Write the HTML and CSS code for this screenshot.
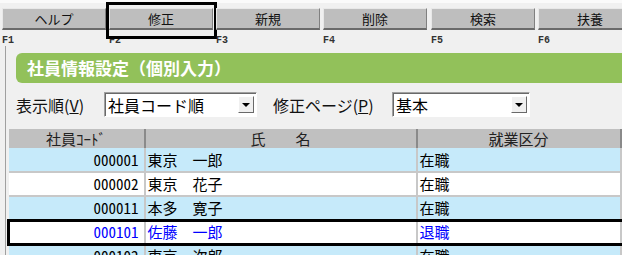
FILE: index.html
```html
<!DOCTYPE html>
<html lang="ja">
<head>
    <meta charset="UTF-8">
    <meta name="viewport" content="width=device-width, initial-scale=1.0">
    <title>社員情報設定（個別入力）</title>
    <link rel="stylesheet" href="styles.css">
</head>
<body>
    <div class="window">
        <div class="fkeys">
            <div class="fkey">
                <button class="fkey-button">ヘルプ</button>
                <span class="fkey-label">F1</span>
            </div>
            <div class="fkey active">
                <button class="fkey-button">修正</button>
                <span class="fkey-label">F2</span>
            </div>
            <div class="fkey">
                <button class="fkey-button">新規</button>
                <span class="fkey-label">F3</span>
            </div>
            <div class="fkey">
                <button class="fkey-button">削除</button>
                <span class="fkey-label">F4</span>
            </div>
            <div class="fkey group-start">
                <button class="fkey-button">検索</button>
                <span class="fkey-label">F5</span>
            </div>
            <div class="fkey">
                <button class="fkey-button">扶養</button>
                <span class="fkey-label">F6</span>
            </div>
        </div>

        <div class="panel">
            <h2 class="panel-title">社員情報設定（個別入力）</h2>

            <div class="options">
                <label class="option-label">表示順(<u>V</u>)</label>
                <div class="select">
                    <span class="select-value">社員コード順</span>
                    <span class="select-arrow"></span>
                </div>
                <label class="option-label option-label-page">修正ページ(<u>P</u>)</label>
                <div class="select">
                    <span class="select-value">基本</span>
                    <span class="select-arrow"></span>
                </div>
            </div>

            <div class="grid">
                <table>
                    <thead>
                        <tr>
                            <th class="col-code">社員ｺｰﾄﾞ</th>
                            <th class="col-name">氏　　名</th>
                            <th class="col-status">就業区分</th>
                            <th class="col-extra">所属</th>
                        </tr>
                    </thead>
                    <tbody>
                        <tr class="row-alt">
                            <td class="code">000001</td>
                            <td>東京　一郎</td>
                            <td>在職</td>
                            <td>本社</td>
                        </tr>
                        <tr>
                            <td class="code">000002</td>
                            <td>東京　花子</td>
                            <td>在職</td>
                            <td>本社</td>
                        </tr>
                        <tr class="row-alt">
                            <td class="code">000011</td>
                            <td>本多　寛子</td>
                            <td>在職</td>
                            <td>本社</td>
                        </tr>
                        <tr class="row-selected">
                            <td class="code">000101</td>
                            <td>佐藤　一郎</td>
                            <td>退職</td>
                            <td>本社</td>
                        </tr>
                        <tr class="row-alt">
                            <td class="code">000102</td>
                            <td>東京　次郎</td>
                            <td>在職</td>
                            <td>本社</td>
                        </tr>
                    </tbody>
                </table>
            </div>
        </div>
    </div>
</body>
</html>
```

FILE: styles.css
```css
:root {
    --color-window: #f0f0f0;
    --color-title: #92c15a;
    --color-header: #c0c0c0;
    --color-row-alt: #c6eafa;
    --color-gridline: #c8c8c8;
    --color-selected-text: #0000ff;
}

* {
    box-sizing: border-box;
    margin: 0;
    padding: 0;
}

body {
    background: #fff;
    font-family: "Noto Sans CJK JP", "Noto Sans", sans-serif;
}

.window {
    width: 622px;
    height: 255px;
    overflow: hidden;
    background: var(--color-window);
}

/* function key bar */
.fkeys {
    display: flex;
    gap: 3px;
    padding: 5px 0 0 2px;
    border-top: 3px solid #fafafa;
}

.fkey {
    position: relative;
    display: flex;
    flex-direction: column;
    width: 104px;
    flex-shrink: 0;
}

.fkey.group-start {
    margin-left: 1px;
}

.fkey-button {
    height: 22px;
    background: #bebebe;
    border-style: solid;
    border-width: 1px 1px 2px 1px;
    border-color: #e8e8e8 #808080 #6a6a6a #e8e8e8;
    font-family: inherit;
    font-size: 13px;
    line-height: 18px;
    color: #111;
}

.fkey-label {
    margin-top: 6px;
    font-family: "Liberation Mono", monospace;
    font-size: 10px;
    font-weight: bold;
    line-height: 10px;
    color: #333;
}

.fkey.active::after {
    content: "";
    position: absolute;
    top: -6px;
    left: -3px;
    right: -4px;
    height: 31px;
    border: 3px solid #000;
}

/* panel */
.panel {
    margin-top: 0;
    margin-left: 5px;
    padding-top: 7px;
    border-left: 1px solid #a0a0a0;
    height: 220px;
}

.panel-title {
    height: 30px;
    margin-left: 10px;
    padding-left: 11px;
    background: var(--color-title);
    border-radius: 6px 0 0 6px;
    color: #fff;
    font-size: 17px;
    font-weight: bold;
    line-height: 30px;
}

.options {
    display: grid;
    grid-template-columns: 88px 153px 135px 138px;
    align-items: center;
    margin: 9px 0 0 10px;
    height: 25px;
    font-size: 16px;
}

.option-label {
    color: #111;
}

.option-label-page {
    padding-left: 16px;
}

.select {
    display: flex;
    align-items: center;
    justify-content: space-between;
    height: 25px;
    padding: 0 2px 0 3px;
    background: #fff;
    border: 1px solid;
    border-color: #a0a0a0 #fff #fff #a0a0a0;
    box-shadow: inset 1px 1px 0 #696969;
    color: #000;
}

.select-arrow {
    position: relative;
    width: 16px;
    height: 17px;
    background: var(--color-window);
    border: 1px solid;
    border-color: #fff #696969 #696969 #fff;
}

.select-arrow::after {
    content: "";
    position: absolute;
    top: 6px;
    left: 3px;
    border-left: 4px solid transparent;
    border-right: 4px solid transparent;
    border-top: 4px solid #000;
}

/* grid */
.grid {
    margin: 12px 0 0 1px;
}

table {
    border-collapse: collapse;
    table-layout: fixed;
    width: 712px;
    font-size: 15px;
}

.col-code {
    width: 136px;
}

.col-name {
    width: 272px;
}

.col-status {
    width: 204px;
}

.col-extra {
    width: 100px;
}

thead th {
    height: 19px;
    padding: 0;
    background: var(--color-header);
    border-right: 2px solid #8a8a8a;
    font-weight: normal;
    line-height: 19px;
    color: #222;
    text-align: center;
}

tbody td {
    height: 24px;
    padding: 0 2px;
    background: #fff;
    border-right: 2px solid var(--color-gridline);
    border-bottom: 2px solid var(--color-gridline);
    line-height: 20px;
    white-space: nowrap;
    color: #000;
}

tbody td.code {
    padding-right: 5px;
    text-align: right;
    font-feature-settings: "hwid";
}

tbody .row-alt td {
    background: var(--color-row-alt);
}

tbody .row-selected td {
    color: var(--color-selected-text);
    border-top: 3px solid #000;
    border-bottom: 3px solid #000;
}

tbody .row-selected td:first-child {
    border-left: 3px solid #000;
}
```
